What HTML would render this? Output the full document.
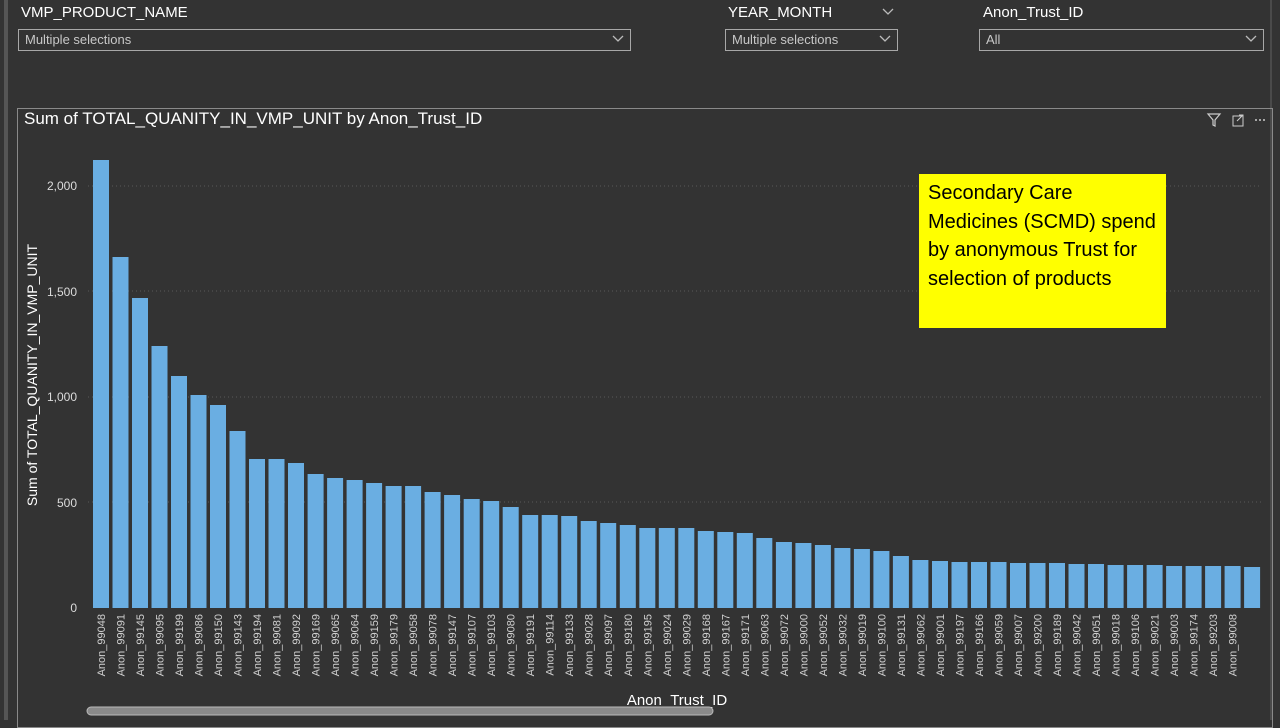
<!DOCTYPE html>
<html><head><meta charset="utf-8"><style>
body{margin:0;width:1280px;height:720px;background:#333333;overflow:hidden;font-family:"Liberation Sans",Arial,sans-serif;position:relative}
.lbl{position:absolute;color:#fff;font-size:15px;top:4px}
.dd{position:absolute;top:29px;height:22px;border:1.5px solid #a8a8a8;box-sizing:border-box;color:#c8c8c8;font-size:13px;line-height:20px;padding-left:6px}
.chev{position:absolute;right:6px;top:5px}
</style></head><body>
<div style="position:absolute;left:4px;top:0;width:4px;height:720px;background:#555"></div>
<div class="lbl" style="left:21px">VMP_PRODUCT_NAME</div>
<div class="dd" style="left:18px;width:613px">Multiple selections<svg class="chev" width="12" height="8"><path d="M1 1L6 6L11 1" stroke="#bbb" fill="none" stroke-width="1.3"/></svg></div>
<div class="lbl" style="left:728px">YEAR_MONTH</div>
<svg style="position:absolute;left:882px;top:8px" width="12" height="8"><path d="M1 1L6 6L11 1" stroke="#bbb" fill="none" stroke-width="1.3"/></svg>
<div class="dd" style="left:725px;width:173px">Multiple selections<svg class="chev" width="12" height="8"><path d="M1 1L6 6L11 1" stroke="#bbb" fill="none" stroke-width="1.3"/></svg></div>
<div class="lbl" style="left:983px">Anon_Trust_ID</div>
<div class="dd" style="left:979px;width:285px">All<svg class="chev" width="12" height="8"><path d="M1 1L6 6L11 1" stroke="#bbb" fill="none" stroke-width="1.3"/></svg></div>
<div style="position:absolute;left:1270px;top:0;width:2px;height:720px;background:#4a4a4a"></div>
<div style="position:absolute;left:17px;top:108px;width:1256px;height:620px;border:1px solid #8a8a8a;box-sizing:border-box"></div>
<div style="position:absolute;left:24px;top:109px;color:#fff;font-size:17px">Sum of TOTAL_QUANITY_IN_VMP_UNIT by Anon_Trust_ID</div>
<svg style="position:absolute;left:1206px;top:112px" width="64" height="16">
<path d="M2 2H14L9 8V14L7 13V8Z" stroke="#ccc" fill="none" stroke-width="1.2"/>
<rect x="27" y="4" width="10" height="10" stroke="#ccc" fill="none"/><path d="M31 9L37 3M33 3H37V7" stroke="#ccc" fill="none"/>
<circle cx="50" cy="8" r="1" fill="#ccc"/><circle cx="54" cy="8" r="1" fill="#ccc"/><circle cx="58" cy="8" r="1" fill="#ccc"/>
</svg>
<div style="position:absolute;left:919px;top:174px;width:247px;height:154px;background:#ffff00;color:#000;font-size:20px;line-height:28.7px;padding:5px 9px;box-sizing:border-box">Secondary Care Medicines (SCMD) spend by anonymous Trust for selection of products</div>
<svg style="position:absolute;left:0;top:0" width="1280" height="720" font-family="Liberation Sans, Arial, sans-serif">
<g stroke="#5a5a5a" stroke-dasharray="1 3">
<line x1="88" x2="918" y1="186" y2="186"/><line x1="1166" x2="1262" y1="186" y2="186"/>
<line x1="88" x2="918" y1="291" y2="291"/><line x1="1166" x2="1262" y1="291" y2="291"/>
<line x1="88" x2="1262" y1="397" y2="397"/><line x1="88" x2="1262" y1="502" y2="502"/>
</g>
<g fill="#dcdcdc" font-size="12" text-anchor="end">
<text x="77" y="190">2,000</text><text x="77" y="296">1,500</text><text x="77" y="401">1,000</text><text x="77" y="507">500</text><text x="77" y="612">0</text>
</g>
<text transform="translate(37,375) rotate(-90)" fill="#fff" font-size="14" text-anchor="middle">Sum of TOTAL_QUANITY_IN_VMP_UNIT</text>
<text x="677" y="705" fill="#fff" font-size="15" text-anchor="middle">Anon_Trust_ID</text>
<g fill="#6aaee2">
<rect x="93" y="160" width="16" height="448"/><rect x="112.5" y="257" width="16" height="351"/><rect x="132" y="298" width="16" height="310"/><rect x="151.5" y="346" width="16" height="262"/><rect x="171" y="376" width="16" height="232"/><rect x="190.5" y="395" width="16" height="213"/><rect x="210" y="405" width="16" height="203"/><rect x="229.5" y="431" width="16" height="177"/><rect x="249" y="459" width="16" height="149"/><rect x="268.5" y="459" width="16" height="149"/>
<rect x="288" y="463" width="16" height="145"/><rect x="307.6" y="474" width="16" height="134"/><rect x="327.1" y="478" width="16" height="130"/><rect x="346.6" y="480" width="16" height="128"/><rect x="366.1" y="483" width="16" height="125"/><rect x="385.6" y="486" width="16" height="122"/><rect x="405.1" y="486" width="16" height="122"/><rect x="424.6" y="492" width="16" height="116"/><rect x="444.1" y="495" width="16" height="113"/><rect x="463.7" y="499" width="16" height="109"/>
<rect x="483.2" y="501" width="16" height="107"/><rect x="502.7" y="507" width="16" height="101"/><rect x="522.2" y="515" width="16" height="93"/><rect x="541.7" y="515" width="16" height="93"/><rect x="561.2" y="516" width="16" height="92"/><rect x="580.7" y="521" width="16" height="87"/><rect x="600.2" y="523" width="16" height="85"/><rect x="619.8" y="525" width="16" height="83"/><rect x="639.3" y="528" width="16" height="80"/><rect x="658.8" y="528" width="16" height="80"/>
<rect x="678.3" y="528" width="16" height="80"/><rect x="697.8" y="531" width="16" height="77"/><rect x="717.3" y="532" width="16" height="76"/><rect x="736.8" y="533" width="16" height="75"/><rect x="756.3" y="538" width="16" height="70"/><rect x="775.9" y="542" width="16" height="66"/><rect x="795.4" y="543" width="16" height="65"/><rect x="814.9" y="545" width="16" height="63"/><rect x="834.4" y="548" width="16" height="60"/><rect x="853.9" y="549" width="16" height="59"/>
<rect x="873.4" y="551" width="16" height="57"/><rect x="892.9" y="556" width="16" height="52"/><rect x="912.4" y="560" width="16" height="48"/><rect x="932" y="561" width="16" height="47"/><rect x="951.5" y="562" width="16" height="46"/><rect x="971" y="562" width="16" height="46"/><rect x="990.5" y="562" width="16" height="46"/><rect x="1010" y="563" width="16" height="45"/><rect x="1029.5" y="563" width="16" height="45"/><rect x="1049" y="563" width="16" height="45"/>
<rect x="1068.5" y="564" width="16" height="44"/><rect x="1088" y="564" width="16" height="44"/><rect x="1107.6" y="565" width="16" height="43"/><rect x="1127.1" y="565" width="16" height="43"/><rect x="1146.6" y="565" width="16" height="43"/><rect x="1166.1" y="566" width="16" height="42"/><rect x="1185.6" y="566" width="16" height="42"/><rect x="1205.1" y="566" width="16" height="42"/><rect x="1224.6" y="566" width="16" height="42"/><rect x="1244.1" y="567" width="16" height="41"/>
</g>
<g fill="#d0d0d0" font-size="11" text-anchor="end">
<text transform="translate(105,614) rotate(-90)">Anon_99048</text><text transform="translate(124.5,614) rotate(-90)">Anon_99091</text><text transform="translate(144,614) rotate(-90)">Anon_99145</text><text transform="translate(163.5,614) rotate(-90)">Anon_99095</text><text transform="translate(183,614) rotate(-90)">Anon_99199</text><text transform="translate(202.5,614) rotate(-90)">Anon_99086</text><text transform="translate(222,614) rotate(-90)">Anon_99150</text><text transform="translate(241.5,614) rotate(-90)">Anon_99143</text><text transform="translate(261,614) rotate(-90)">Anon_99194</text><text transform="translate(280.5,614) rotate(-90)">Anon_99081</text>
<text transform="translate(300,614) rotate(-90)">Anon_99092</text><text transform="translate(319.6,614) rotate(-90)">Anon_99169</text><text transform="translate(339.1,614) rotate(-90)">Anon_99065</text><text transform="translate(358.6,614) rotate(-90)">Anon_99064</text><text transform="translate(378.1,614) rotate(-90)">Anon_99159</text><text transform="translate(397.6,614) rotate(-90)">Anon_99179</text><text transform="translate(417.1,614) rotate(-90)">Anon_99058</text><text transform="translate(436.6,614) rotate(-90)">Anon_99078</text><text transform="translate(456.1,614) rotate(-90)">Anon_99147</text><text transform="translate(475.7,614) rotate(-90)">Anon_99107</text>
<text transform="translate(495.2,614) rotate(-90)">Anon_99103</text><text transform="translate(514.7,614) rotate(-90)">Anon_99080</text><text transform="translate(534.2,614) rotate(-90)">Anon_99191</text><text transform="translate(553.7,614) rotate(-90)">Anon_99114</text><text transform="translate(573.2,614) rotate(-90)">Anon_99133</text><text transform="translate(592.7,614) rotate(-90)">Anon_99028</text><text transform="translate(612.2,614) rotate(-90)">Anon_99097</text><text transform="translate(631.8,614) rotate(-90)">Anon_99180</text><text transform="translate(651.3,614) rotate(-90)">Anon_99195</text><text transform="translate(670.8,614) rotate(-90)">Anon_99024</text>
<text transform="translate(690.3,614) rotate(-90)">Anon_99029</text><text transform="translate(709.8,614) rotate(-90)">Anon_99168</text><text transform="translate(729.3,614) rotate(-90)">Anon_99167</text><text transform="translate(748.8,614) rotate(-90)">Anon_99171</text><text transform="translate(768.3,614) rotate(-90)">Anon_99063</text><text transform="translate(787.9,614) rotate(-90)">Anon_99072</text><text transform="translate(807.4,614) rotate(-90)">Anon_99000</text><text transform="translate(826.9,614) rotate(-90)">Anon_99052</text><text transform="translate(846.4,614) rotate(-90)">Anon_99032</text><text transform="translate(865.9,614) rotate(-90)">Anon_99019</text>
<text transform="translate(885.4,614) rotate(-90)">Anon_99100</text><text transform="translate(904.9,614) rotate(-90)">Anon_99131</text><text transform="translate(924.4,614) rotate(-90)">Anon_99062</text><text transform="translate(944,614) rotate(-90)">Anon_99001</text><text transform="translate(963.5,614) rotate(-90)">Anon_99197</text><text transform="translate(983,614) rotate(-90)">Anon_99166</text><text transform="translate(1002.5,614) rotate(-90)">Anon_99059</text><text transform="translate(1022,614) rotate(-90)">Anon_99007</text><text transform="translate(1041.5,614) rotate(-90)">Anon_99200</text><text transform="translate(1061,614) rotate(-90)">Anon_99189</text>
<text transform="translate(1080.5,614) rotate(-90)">Anon_99042</text><text transform="translate(1100,614) rotate(-90)">Anon_99051</text><text transform="translate(1119.6,614) rotate(-90)">Anon_99018</text><text transform="translate(1139.1,614) rotate(-90)">Anon_99106</text><text transform="translate(1158.6,614) rotate(-90)">Anon_99021</text><text transform="translate(1178.1,614) rotate(-90)">Anon_99003</text><text transform="translate(1197.6,614) rotate(-90)">Anon_99174</text><text transform="translate(1217.1,614) rotate(-90)">Anon_99203</text><text transform="translate(1236.6,614) rotate(-90)">Anon_99008</text>
</g>
<rect x="87" y="707" width="626" height="8" rx="4" fill="#8a8a8a" stroke="#bbb"/>
</svg>
</body></html>
